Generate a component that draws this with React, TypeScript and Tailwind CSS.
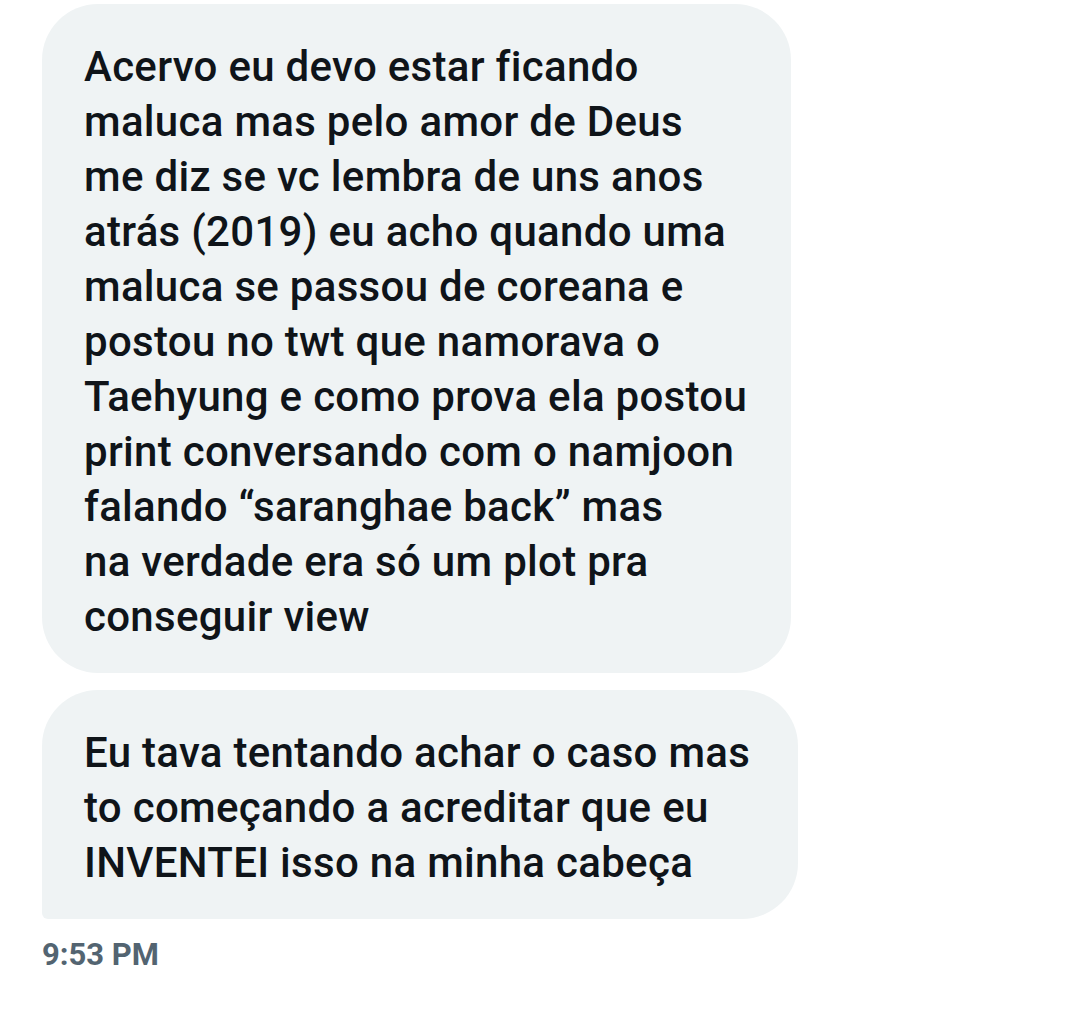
const first = [
  "Acervo eu devo estar ficando",
  "maluca mas pelo amor de Deus",
  "me diz se vc lembra de uns anos",
  "atrás (2019) eu acho quando uma",
  "maluca se passou de coreana e",
  "postou no twt que namorava o",
  "Taehyung e como prova ela postou",
  "print conversando com o namjoon",
  "falando “saranghae back” mas",
  "na verdade era só um plot pra",
  "conseguir view",
];

const second = [
  "Eu tava tentando achar o caso mas",
  "to começando a acreditar que eu",
  "INVENTEI isso na minha cabeça",
];

function Lines({ lines }: { lines: string[] }) {
  return (
    <>
      {lines.map((line) => (
        <div key={line} className="whitespace-nowrap">
          {line}
        </div>
      ))}
    </>
  );
}

export default function App() {
  return (
    <div className="w-[1080px] h-[1018px] bg-white font-['Roboto',sans-serif] text-[#0f1419] overflow-hidden">
      <div className="flex flex-col items-start pl-[42px] pt-[4px]">
        <div className="w-[749px] rounded-[56px] bg-[#eff3f4] pl-[42px] pt-[35px] pb-[29px] text-[42px] leading-[55px] font-medium tracking-[0.3px]">
          <Lines lines={first} />
        </div>
        <div className="mt-[17px] w-[756px] rounded-[56px] rounded-bl-[6px] bg-[#eff3f4] pl-[42px] pt-[35px] pb-[29px] text-[42px] leading-[55px] font-medium tracking-[0.3px]">
          <Lines lines={second} />
        </div>
        <div className="mt-[16px] text-[31px] leading-[40px] font-bold text-[#536471]">9:53 PM</div>
      </div>
    </div>
  );
}
